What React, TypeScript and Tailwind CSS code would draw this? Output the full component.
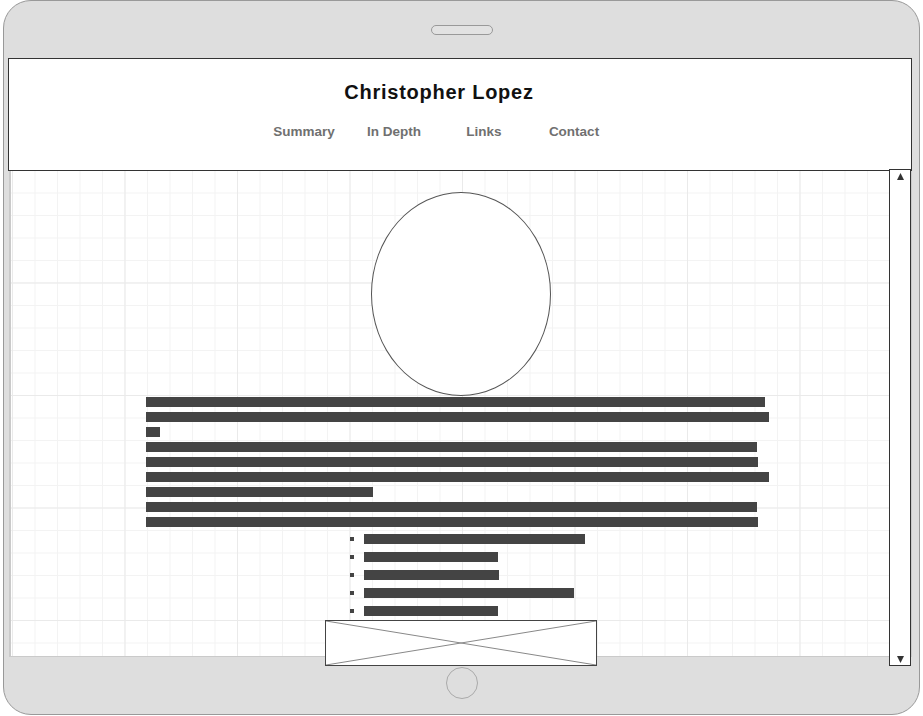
import React from "react";

const textBars = [619, 623, 14, 611, 612, 623, 227, 611, 612];
const listBars = [221, 134, 135, 210, 134];
const navItems = ["Summary", "In Depth", "Links", "Contact"];

const Scrollbar = () => (
  <div className="absolute left-[881px] top-[111px] flex h-[497px] w-[22px] flex-col items-center justify-between border border-[#333] bg-white pt-[3px] pb-[2px]">
    <svg width="7" height="7" viewBox="0 0 7 7">
      <polygon points="3.5,0 7,7 0,7" fill="#333" />
    </svg>
    <svg width="7" height="7" viewBox="0 0 7 7">
      <polygon points="0,0 7,0 3.5,7" fill="#333" />
    </svg>
  </div>
);

const ImagePlaceholder = () => (
  <div className="mt-[4px] h-[46px] w-[272px] shrink-0 border border-[#444] bg-white">
    <svg className="h-full w-full" viewBox="0 0 100 100" preserveAspectRatio="none">
      <line x1="0" y1="0" x2="100" y2="100" stroke="#888" strokeWidth="1" vectorEffect="non-scaling-stroke" />
      <line x1="100" y1="0" x2="0" y2="100" stroke="#888" strokeWidth="1" vectorEffect="non-scaling-stroke" />
    </svg>
  </div>
);

export default function App() {
  return (
    <div className="h-[716px] w-[923px] overflow-hidden bg-white font-['Liberation_Sans',Arial,sans-serif]">
      <div className="ml-[3px] flex h-[715px] w-[917px] flex-col rounded-[28px] border border-[#999] bg-[#dedede]">
        {/* top bezel */}
        <div className="flex h-[57px] shrink-0 justify-center pt-[24px]">
          <div className="h-[10px] w-[62px] rounded-full border border-[#999] bg-[#e2e2e2]" />
        </div>

        {/* screen */}
        <div className="relative z-10 ml-[4px] w-[904px] shrink-0">
          <header className="flex h-[113px] flex-col items-center border border-[#333] bg-white pt-[21px] pr-[42px]">
            <h1 className="text-[20px] leading-[24px] font-bold tracking-[0.75px] text-[#111]">Christopher Lopez</h1>
            <nav className="mt-[20px] flex">
              {navItems.map((item) => (
                <span key={item} className="w-[90px] text-center text-[13.5px] leading-[16px] font-bold text-[#707070]">
                  {item}
                </span>
              ))}
            </nav>
          </header>

          <div className="ml-[1px] flex h-[486px] w-[903px] flex-col items-center border-r-2 border-b border-l-2 border-[#cacaca] bg-white bg-[linear-gradient(to_right,#eaeaea_1px,transparent_1px),linear-gradient(to_bottom,#eaeaea_1px,transparent_1px),linear-gradient(to_right,#f3f3f3_1px,transparent_1px),linear-gradient(to_bottom,#f3f3f3_1px,transparent_1px)] bg-[size:112.5px_112.5px,112.5px_112.5px,22.5px_22.5px,22.5px_22.5px] bg-[position:1px_-1px] pt-[21px]">
            <div className="h-[204px] w-[180px] shrink-0 rounded-[50%] border border-[#555] bg-white" />

            <div className="mt-[1px] flex w-[630px] shrink-0 flex-col gap-[5px]">
              {textBars.map((w, i) => (
                <div key={i} className="h-[10px] bg-[#444]" style={{ width: w }} />
              ))}
            </div>

            <ul className="mt-[7px] flex w-[222px] shrink-0 flex-col gap-[8px]">
              {listBars.map((w, i) => (
                <li key={i} className="flex h-[10px] items-center gap-[10px]">
                  <span className="h-[4px] w-[4px] shrink-0 bg-[#444]" />
                  <span className="h-[10px] shrink-0 bg-[#444]" style={{ width: w }} />
                </li>
              ))}
            </ul>

            <ImagePlaceholder />
          </div>

          <Scrollbar />
        </div>

        {/* bottom bezel */}
        <div className="flex justify-center pt-[10px]">
          <div className="h-[32px] w-[32px] rounded-full border border-[#aaa]" />
        </div>
      </div>
    </div>
  );
}
